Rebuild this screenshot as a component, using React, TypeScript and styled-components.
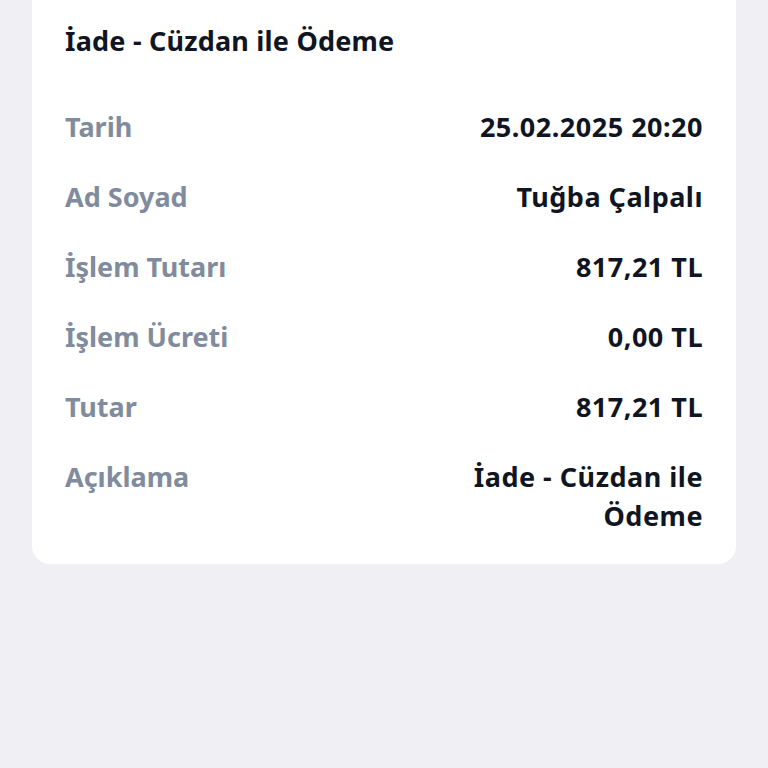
import React from "react";
import styled, { createGlobalStyle } from "styled-components";

const Global = createGlobalStyle`
  html, body { margin: 0; padding: 0; background: #efeff4; }
  body { font-family: "Noto Sans", "Open Sans", sans-serif; }
`;

const Page = styled.div`
  min-height: 768px;
  padding: 0 32px;
  box-sizing: border-box;
  background: #efeff4;
`;

const Card = styled.div`
  background: #ffffff;
  border-radius: 0 0 18px 18px;
  padding: 21px 33px 29px 33px;
  display: flex;
  flex-direction: column;
`;

const Title = styled.h1`
  margin: 0 0 47px 0;
  font-size: 27px;
  line-height: 39px;
  font-weight: 700;
  color: #0f1522;
  letter-spacing: 0.2px;
`;

const List = styled.div`
  display: flex;
  flex-direction: column;
  gap: 31px;
`;

const Row = styled.div`
  display: flex;
  justify-content: space-between;
  align-items: flex-start;
  gap: 24px;
`;

const Label = styled.span`
  font-size: 27px;
  line-height: 39px;
  font-weight: 700;
  color: #808c9d;
  white-space: nowrap;
`;

const Value = styled.span<{ $max?: number }>`
  font-size: 27px;
  line-height: 39px;
  font-weight: 700;
  color: #0f1522;
  text-align: right;
  letter-spacing: 0.5px;
  max-width: ${(p) => (p.$max ? `${p.$max}px` : "none")};
`;

const rows: { label: string; value: string; max?: number }[] = [
  { label: "Tarih", value: "25.02.2025 20:20" },
  { label: "Ad Soyad", value: "Tuğba Çalpalı" },
  { label: "İşlem Tutarı", value: "817,21 TL" },
  { label: "İşlem Ücreti", value: "0,00 TL" },
  { label: "Tutar", value: "817,21 TL" },
  { label: "Açıklama", value: "İade - Cüzdan ile Ödeme", max: 260 },
];

export default function App() {
  return (
    <>
      <Global />
      <Page>
        <Card>
          <Title>İade - Cüzdan ile Ödeme</Title>
          <List>
            {rows.map((r) => (
              <Row key={r.label}>
                <Label>{r.label}</Label>
                <Value $max={r.max}>{r.value}</Value>
              </Row>
            ))}
          </List>
        </Card>
      </Page>
    </>
  );
}
